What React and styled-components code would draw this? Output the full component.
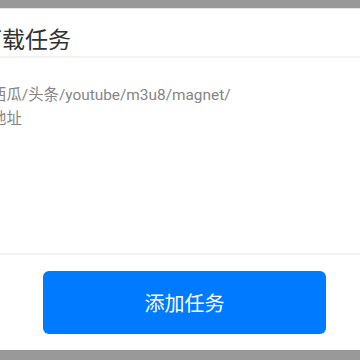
import React from "react";
import styled, { createGlobalStyle } from "styled-components";

const GlobalStyle = createGlobalStyle`
  html, body {
    margin: 0;
    padding: 0;
    background: #999999;
  }
  body {
    font-family: "Roboto", "Noto Sans CJK SC", sans-serif;
  }
`;

const Screen = styled.div`
  width: 360px;
  height: 360px;
  padding: 8px 0 10px;
  box-sizing: border-box;
  overflow: hidden;
`;

const Panel = styled.div`
  height: 100%;
  margin-left: -30px;
  width: 390px;
  background: #fff;
  border-top: 1px solid #e6e6e6;
  box-sizing: border-box;
  display: flex;
  flex-direction: column;
`;

const Header = styled.div`
  height: 49px;
  display: flex;
  align-items: center;
  padding-left: 9px;
  padding-top: 10px;
  box-sizing: border-box;
  font-size: 23px;
  color: #333;
  border-bottom: 2px solid #f3f3f3;
`;

const Body = styled.div`
  flex: 1;
  padding: 25px 0 0 21px;
  border-bottom: 2px solid #f3f3f3;
`;

const Placeholder = styled.div`
  font-size: 15.4px;
  line-height: 24px;
  color: #858585;
`;

const Footer = styled.div`
  height: 95px;
  display: flex;
  align-items: center;
  padding-left: 73px;
  box-sizing: border-box;
`;

const AddButton = styled.button`
  width: 283px;
  height: 63px;
  border: none;
  border-radius: 6px;
  background: #007aff;
  color: #fff;
  font-size: 20px;
  font-family: "Roboto", "Noto Sans CJK SC", sans-serif;
  cursor: pointer;
`;

export default function App() {
  return (
    <>
      <GlobalStyle />
      <Screen>
        <Panel>
          <Header>下载任务</Header>
          <Body>
            <Placeholder>
              西瓜/头条/youtube/m3u8/magnet/
              <br />
              地址
            </Placeholder>
          </Body>
          <Footer>
            <AddButton>添加任务</AddButton>
          </Footer>
        </Panel>
      </Screen>
    </>
  );
}
